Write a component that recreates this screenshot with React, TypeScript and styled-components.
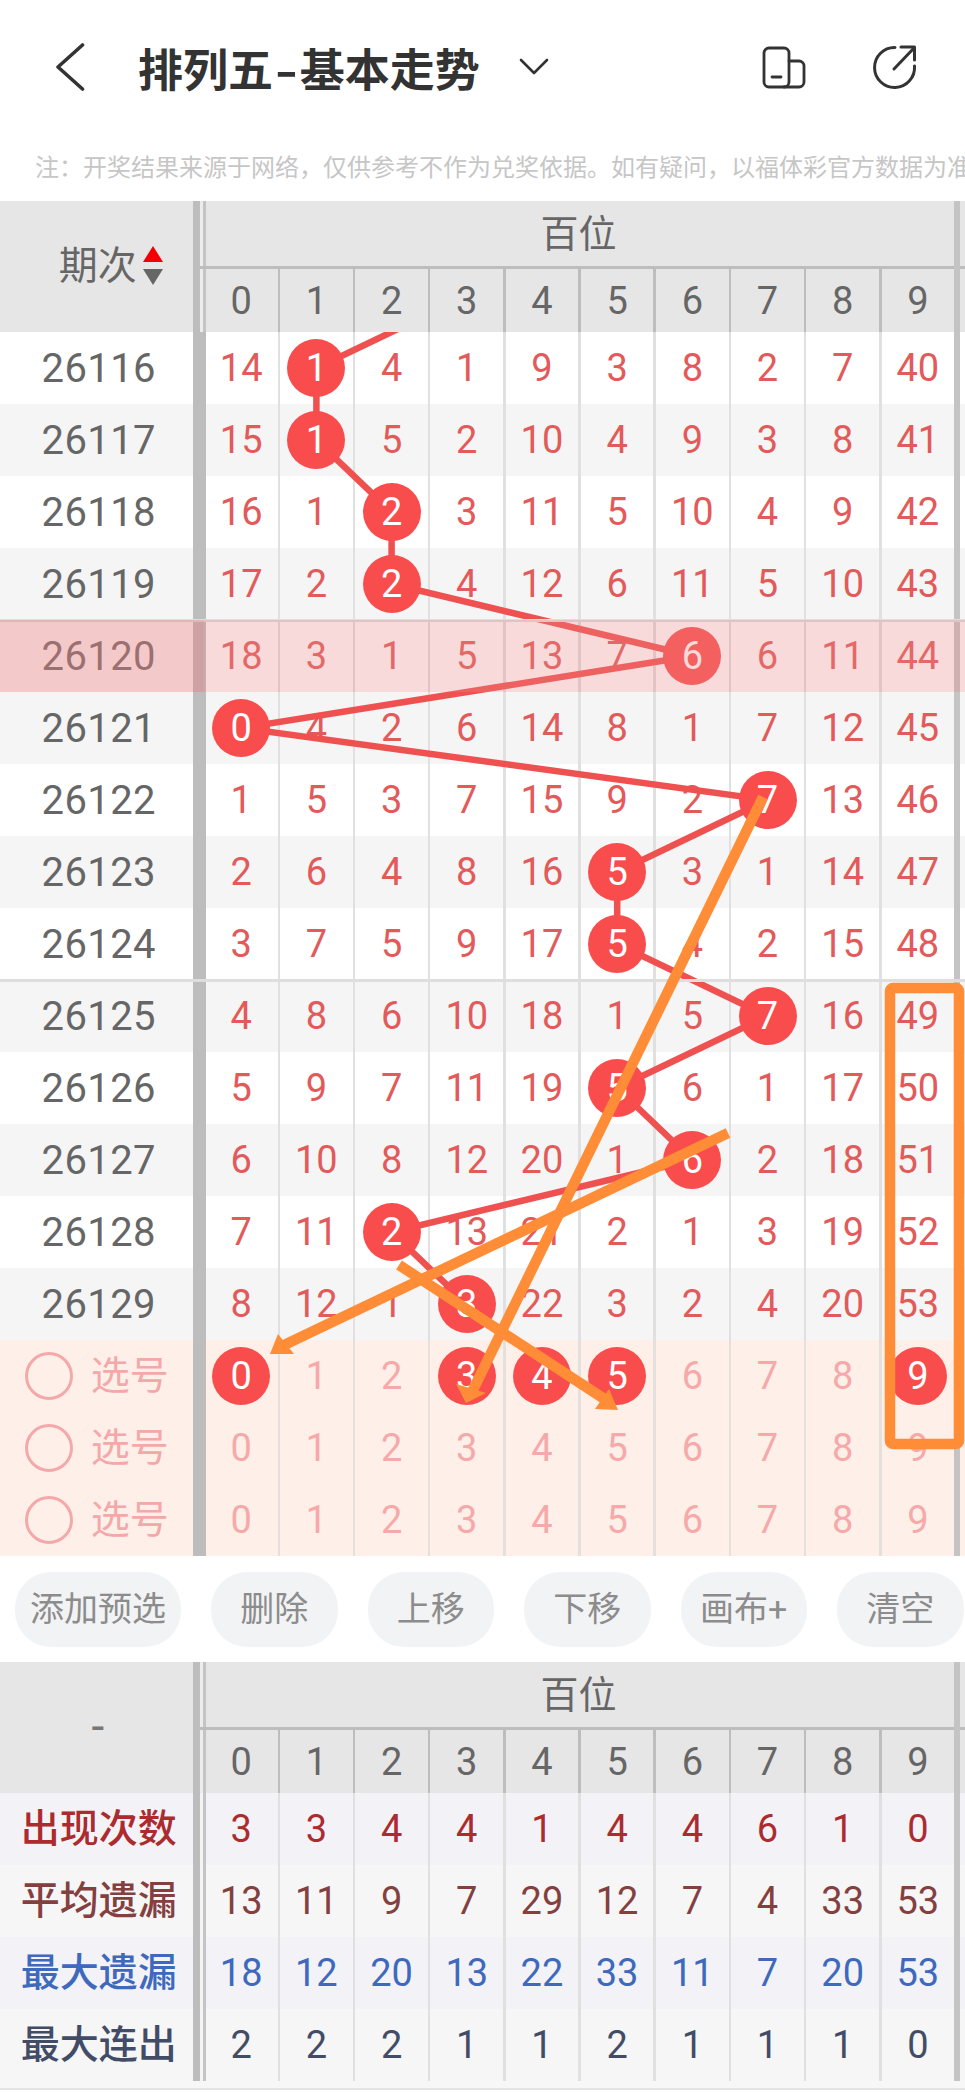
import styled, { createGlobalStyle } from "styled-components";

const GRID = "203.6px repeat(10, 75.2px) 1fr";
const FONT = `Roboto, "Noto Sans CJK SC", sans-serif`;

const GlobalStyle = createGlobalStyle`
    html, body { margin: 0; padding: 0; background: #fff; }
    body { font-family: ${FONT}; overflow-x: hidden; }
    * { box-sizing: border-box; }
`;

const Page = styled.div`
    width: 965px;
    height: 2092px;
    overflow: hidden;
    background: #fff;
`;

const Nav = styled.div`
    height: 134px;
    display: flex;
    align-items: center;
    padding: 0 47px 0 55px;
`;
const Title = styled.div`
    margin-left: 53px;
    font-size: 45px;
    font-weight: 700;
    color: #333;
    white-space: nowrap;
    font-family: "Noto Sans CJK SC", sans-serif;
`;
const TitleDash = styled.span`
    display: inline-block;
    margin: 0 5px;
    transform: scaleX(1.4);
`;
const NavIcon = styled.svg<{ $gap?: number }>`
    display: block;
    flex: none;
    margin-left: ${(p) => p.$gap ?? 0}px;
`;
const Spacer = styled.div`
    flex: 1;
`;

const Note = styled.div`
    height: 67px;
    padding: 0 0 0 35px;
    font-size: 24px;
    line-height: 64px;
    color: #c6c6c6;
    white-space: nowrap;
    overflow: hidden;
    font-family: "Noto Sans CJK SC", sans-serif;
`;

const HeadGrid = styled.div`
    display: grid;
    grid-template-columns: ${GRID};
    grid-template-rows: 68px 63px;
    background: #e6e6e6;
    color: #666;
    font-size: 38px;
`;
const Corner = styled.div`
    grid-row: 1 / 3;
    position: relative;
    display: flex;
    align-items: center;
    justify-content: center;
    padding-right: 8px;
    &::after {
        content: "";
        position: absolute;
        top: 0;
        bottom: 0;
        left: 193px;
        width: 13px;
        background: linear-gradient(to right, #bdbdbd 7px, #ececec 7px, #ececec 10px, #c4c4c4 10px);
    }
`;
const CornerLabel = styled.span`
    position: relative;
    line-height: 1;
    margin-top: -1px;
    font-size: 39px;
`;
const SortArrows = styled.span`
    position: absolute;
    left: 84px;
    top: -1px;
    display: flex;
    flex-direction: column;
    gap: 7px;
`;
const Tri = styled.i<{ $down?: boolean }>`
    display: block;
    width: 0;
    height: 0;
    border-left: 10px solid transparent;
    border-right: 10px solid transparent;
    ${(p) => (p.$down ? "border-top: 16px solid #666;" : "border-bottom: 16px solid #f40000;")}
`;
const Dash = styled.span`
    color: #777;
    font-size: 46px;
    margin-top: -4px;
`;
const Group = styled.div`
    grid-column: 2 / 13;
    position: relative;
    display: flex;
    align-items: center;
    padding-left: 341px;
    border-bottom: 3px solid #bdbdbd;
    margin-left: -4px;
    line-height: 1;
    &::after {
        content: "";
        position: absolute;
        top: 0;
        bottom: -3px;
        left: 754.4px;
        width: 6.5px;
        background: #c4c4c4;
    }
`;
const HeadDigit = styled.div`
    position: relative;
    display: flex;
    align-items: center;
    justify-content: center;
    &::after {
        content: "";
        position: absolute;
        top: 0;
        bottom: 0;
        right: -1.25px;
        width: 2.5px;
        background: #bdbdbd;
    }
`;
const RowEnd = styled.div`
    position: relative;
    &::after {
        content: "";
        position: absolute;
        top: 0;
        bottom: 0;
        left: -1.6px;
        width: 6.5px;
        background: #c4c4c4;
    }
`;

const Board = styled.div`
    position: relative;
`;
const Layer = styled.svg<{ $z: number }>`
    position: absolute;
    left: 0;
    top: 0;
    width: 965px;
    height: 1224px;
    z-index: ${(p) => p.$z};
    pointer-events: none;
`;

const Row = styled.div<{ $bg: string; $rule?: boolean; $lit?: boolean }>`
    position: relative;
    display: grid;
    grid-template-columns: ${GRID};
    height: 72px;
    background: ${(p) => p.$bg};
    font-size: 38px;
    &::before {
        content: ${(p) => (p.$rule ? '""' : "none")};
        position: absolute;
        left: 0;
        right: 0;
        top: -1.5px;
        height: 3px;
        background: #dedede;
        z-index: 1;
    }
    &::after {
        content: ${(p) => (p.$lit ? '""' : "none")};
        position: absolute;
        inset: 0;
        background: rgba(232, 135, 135, 0.31);
        z-index: 3;
    }
`;
const Side = styled.div<{ $color: string; $split?: boolean; $lit?: boolean }>`
    position: relative;
    display: flex;
    align-items: center;
    justify-content: center;
    padding-right: 6px;
    color: ${(p) => p.$color};
    &::before {
        content: ${(p) => (p.$lit ? '""' : "none")};
        position: absolute;
        inset: 0;
        background: rgba(225, 107, 107, 0.16);
        z-index: 3;
    }
    &::after {
        content: "";
        position: absolute;
        top: 0;
        bottom: 0;
        left: 193px;
        width: 13px;
        background: ${(p) =>
            p.$split
                ? "linear-gradient(to right, #bdbdbd 7px, #f4f4f4 7px, #f4f4f4 10px, #c4c4c4 10px)"
                : "#bdbdbd"};
    }
`;
const Issue = styled.span`
    font-size: 40px;
    letter-spacing: 0.4px;
`;
const StatLabel = styled.span`
    font-size: 39px;
    font-weight: 500;
    white-space: nowrap;
    padding-bottom: 8px;
`;
const Cell = styled.div<{ $color: string; $line?: string }>`
    position: relative;
    display: flex;
    align-items: center;
    justify-content: center;
    color: ${(p) => p.$color};
    &::after {
        content: "";
        position: absolute;
        top: 0;
        bottom: 0;
        right: -1.25px;
        width: 2.5px;
        background: ${(p) => p.$line ?? "#e0e0e0"};
    }
`;
const Ball = styled.span`
    position: relative;
    z-index: 2;
    flex: none;
    width: 58px;
    height: 58px;
    border-radius: 50%;
    background: #f94d4d;
    color: #fff;
    display: flex;
    align-items: center;
    justify-content: center;
`;
const Pick = styled.div`
    display: flex;
    align-items: center;
    gap: 18px;
    margin-left: -4px;
`;
const Ring = styled.span`
    flex: none;
    width: 48px;
    height: 48px;
    border: 3.5px solid #f3a9a9;
    border-radius: 50%;
`;
const PickLabel = styled.span`
    font-size: 39px;
    white-space: nowrap;
    padding-bottom: 8px;
`;

const Tools = styled.div`
    height: 106px;
    padding: 16px 0 0 15px;
    display: flex;
    gap: 30px;
    white-space: nowrap;
`;
const Tool = styled.div<{ $wide?: boolean }>`
    flex: none;
    width: ${(p) => (p.$wide ? 166 : 126.5)}px;
    height: 75px;
    padding-bottom: 6px;
    border-radius: 36px;
    background: #f2f3f5;
    color: #8c8c8c;
    font-size: 34px;
    display: flex;
    align-items: center;
    justify-content: center;
`;
const Foot = styled.div`
    height: 9px;
    background: #f7f7f7;
    border-bottom: 2px solid #e4e4e4;
`;

const ROWS: [string, number[], number][] = [
    ["26116", [14, 1, 4, 1, 9, 3, 8, 2, 7, 40], 1],
    ["26117", [15, 1, 5, 2, 10, 4, 9, 3, 8, 41], 1],
    ["26118", [16, 1, 2, 3, 11, 5, 10, 4, 9, 42], 2],
    ["26119", [17, 2, 2, 4, 12, 6, 11, 5, 10, 43], 2],
    ["26120", [18, 3, 1, 5, 13, 7, 6, 6, 11, 44], 6],
    ["26121", [0, 4, 2, 6, 14, 8, 1, 7, 12, 45], 0],
    ["26122", [1, 5, 3, 7, 15, 9, 2, 7, 13, 46], 7],
    ["26123", [2, 6, 4, 8, 16, 5, 3, 1, 14, 47], 5],
    ["26124", [3, 7, 5, 9, 17, 5, 4, 2, 15, 48], 5],
    ["26125", [4, 8, 6, 10, 18, 1, 5, 7, 16, 49], 7],
    ["26126", [5, 9, 7, 11, 19, 5, 6, 1, 17, 50], 5],
    ["26127", [6, 10, 8, 12, 20, 1, 6, 2, 18, 51], 6],
    ["26128", [7, 11, 2, 13, 21, 2, 1, 3, 19, 52], 2],
    ["26129", [8, 12, 1, 3, 22, 3, 2, 4, 20, 53], 3],
];

const STATS = [
    { label: "出现次数", bg: "#f3f3f7", color: "#ab2b2f", values: [3, 3, 4, 4, 1, 4, 4, 6, 1, 0] },
    { label: "平均遗漏", bg: "#f6f6f6", color: "#83403f", values: [13, 11, 9, 7, 29, 12, 7, 4, 33, 53] },
    { label: "最大遗漏", bg: "#f3f3f7", color: "#3f69bd", values: [18, 12, 20, 13, 22, 33, 11, 7, 20, 53] },
    { label: "最大连出", bg: "#f6f6f6", color: "#434c66", values: [2, 2, 2, 1, 1, 2, 1, 1, 1, 0] },
];

const DIGITS = [0, 1, 2, 3, 4, 5, 6, 7, 8, 9];
const TOOLS = ["删除", "上移", "下移", "画布+", "清空"];

const cx = (col: number) => 241.2 + 75.2 * col;
const cy = (row: number) => 36 + 72 * row;

// trend comes in from a row above the visible part of the table
const trend = [[-1, 3], ...ROWS.map((r, i) => [i, r[2]])]
    .map(([row, col]) => `${cx(col)},${cy(row)}`)
    .join(" ");

const Head = ({ corner }: { corner: React.ReactNode }) => (
    <HeadGrid>
        <Corner>{corner}</Corner>
        <Group>百位</Group>
        {DIGITS.map((d) => (
            <HeadDigit key={d}>{d}</HeadDigit>
        ))}
        <RowEnd />
    </HeadGrid>
);

export default function App() {
    return (
        <Page>
            <GlobalStyle />
            <Nav>
                <NavIcon width="30" height="48" viewBox="0 0 30 48" fill="none" stroke="#333" strokeWidth="3.6" strokeLinecap="round" strokeLinejoin="round">
                    <path d="M27.5 2 3 24l24.5 22" />
                </NavIcon>
                <Title>
                    排列五<TitleDash>-</TitleDash>基本走势
                </Title>
                <NavIcon $gap={39} width="30" height="18" viewBox="0 0 30 18" fill="none" stroke="#333" strokeWidth="2.6" strokeLinecap="round" strokeLinejoin="round">
                    <path d="M2 2l13 13L28 2" />
                </NavIcon>
                <Spacer />
                <NavIcon width="48" height="48" viewBox="0 0 48 48" fill="none" stroke="#333" strokeWidth="2.8" strokeLinecap="round" strokeLinejoin="round">
                    <rect x="4" y="5" width="25" height="39" rx="5" />
                    <path d="M29 18h10a5 5 0 0 1 5 5v16a5 5 0 0 1-5 5H24" />
                    <path d="M12 34h9" />
                </NavIcon>
                <NavIcon $gap={62} width="48" height="48" viewBox="0 0 48 48" fill="none" stroke="#333" strokeWidth="3" strokeLinecap="round" strokeLinejoin="round">
                    <path d="M25 4.5A20 20 0 1 0 44.5 23" />
                    <path d="M24 26 44 5" />
                    <path d="M31 4h13.5v13" />
                </NavIcon>
            </Nav>
            <Note>注：开奖结果来源于网络，仅供参考不作为兑奖依据。如有疑问，以福体彩官方数据为准</Note>

            <Head
                corner={
                    <CornerLabel>
                        期次
                        <SortArrows>
                            <Tri />
                            <Tri $down />
                        </SortArrows>
                    </CornerLabel>
                }
            />

            <Board>
                <Layer $z={1} viewBox="0 0 965 1224">
                    <polyline points={trend} fill="none" stroke="#ef5050" strokeWidth="6.5" />
                </Layer>
                {ROWS.map(([issue, values, pick], i) => (
                    <Row
                        key={issue}
                        $bg={i % 2 ? "#f5f5f5" : "#fff"}
                        $rule={i === 4 || i === 9}
                        $lit={i === 4}
                    >
                        <Side $color="#666" $lit={i === 4}>
                            <Issue>{issue}</Issue>
                        </Side>
                        {values.map((v, c) => (
                            <Cell key={c} $color="#e25a5a">
                                {c === pick ? <Ball>{v}</Ball> : v}
                            </Cell>
                        ))}
                        <RowEnd />
                    </Row>
                ))}
                {[[0, 3, 4, 5, 9], [], []].map((picked, i) => (
                    <Row key={i} $bg="#ffefe9">
                        <Side $color="#f3a9a9">
                            <Pick>
                                <Ring />
                                <PickLabel>选号</PickLabel>
                            </Pick>
                        </Side>
                        {DIGITS.map((d) => (
                            <Cell key={d} $color="#f5a9a9" $line="#e4e0dd">
                                {picked.includes(d) ? <Ball>{d}</Ball> : d}
                            </Cell>
                        ))}
                        <RowEnd />
                    </Row>
                ))}
                {/* hand-drawn marks on top of the chart, in page coordinates */}
                <Layer $z={4} viewBox="0 0 965 1224">
                    <g transform="translate(0 -332)" fill="#ff8c36" stroke="#ff8c36" strokeWidth="10.5">
                        <rect x="890" y="988" width="69" height="456" rx="3" fill="none" />
                        <path d="M763 797 472 1392" />
                        <path d="M466 1403 456 1384 486 1393Z" stroke="none" />
                        <path d="M728 1133 282 1346" />
                        <path d="M270 1354 278 1334 294 1354Z" stroke="none" />
                        <path d="M399 1265 606 1400" />
                        <path d="M618 1410 609 1389 595 1409Z" stroke="none" />
                    </g>
                </Layer>
            </Board>

            <Tools>
                <Tool $wide>添加预选</Tool>
                {TOOLS.map((t) => (
                    <Tool key={t}>{t}</Tool>
                ))}
            </Tools>

            <Head corner={<Dash>-</Dash>} />
            {STATS.map((s) => (
                <Row key={s.label} $bg={s.bg}>
                    <Side $color={s.color} $split>
                        <StatLabel>{s.label}</StatLabel>
                    </Side>
                    {s.values.map((v, c) => (
                        <Cell key={c} $color={s.color}>
                            {v}
                        </Cell>
                    ))}
                    <RowEnd />
                </Row>
            ))}
            <Foot />
        </Page>
    );
}
